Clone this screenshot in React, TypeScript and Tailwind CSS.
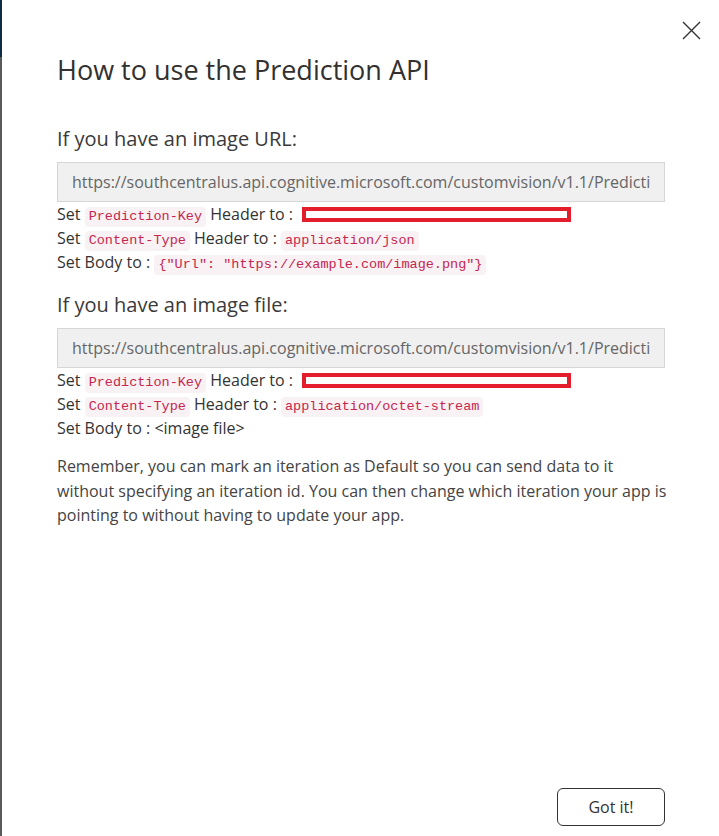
import React from 'react'

function Code({ children }: { children: React.ReactNode }) {
    return (
        <code className="inline-block rounded-[4px] bg-[#f9f2f4] px-[4px] py-[2px] align-baseline font-['Liberation_Mono',monospace] text-[13.5px] leading-[16px] text-[#c7254e]">
            {children}
        </code>
    )
}

function Redacted() {
    return <span className="ml-[9px] inline-block h-[15px] w-[269px] border-4 border-[#e31d2b] bg-white align-[-2px]" />
}

function UrlBox() {
    return (
        <input
            readOnly
            value="https://southcentralus.api.cognitive.microsoft.com/customvision/v1.1/Prediction/3c1b4e0d-9f1a-4b6e-8a2c-7d5e1f0a9b3c/url"
            className="h-[40px] w-[608px] border border-[#d6d6d6] bg-[#f0f0f0] px-[14px] font-['Open_Sans',sans-serif] text-[16px] text-[#666] outline-none"
        />
    )
}

export default function App() {
    return (
        <div className="flex h-[836px] w-[719px] bg-white font-['Open_Sans',sans-serif] text-[#323130]">
            {/* left edge of the page behind the panel */}
            <div className="flex w-[2px] flex-col">
                <div className="h-[57px] bg-[#0f2a45]" />
                <div className="flex-1 bg-[#5a5a5a]" />
            </div>

            <div className="relative flex flex-1 flex-col pl-[55px]">
                <button className="absolute right-[18px] top-[21px] text-[#333]">
                    <svg width="19" height="19" viewBox="0 0 19 19" fill="none" stroke="currentColor" strokeWidth="1.4">
                        <path d="M1 1L18 18M18 1L1 18" />
                    </svg>
                </button>

                <h1 className="mt-[52px] text-[27px] font-normal leading-[36px]">How to use the Prediction API</h1>

                <h2 className="mt-[37px] text-[20px] font-normal leading-[28px] text-[#3a3a3a]">If you have an image URL:</h2>
                <div className="mt-[9px] flex">
                    <UrlBox />
                </div>
                <div className="text-[16px] leading-[24px] text-[#333]">
                    <div className="h-[24px]">Set <Code>Prediction-Key</Code> Header to :<Redacted /></div>
                    <div className="h-[24px]">Set <Code>Content-Type</Code> Header to : <Code>application/json</Code></div>
                    <div className="h-[24px]">Set Body to : <Code>{'{"Url": "https://example.com/image.png"}'}</Code></div>
                </div>

                <h2 className="mt-[17px] text-[20px] font-normal leading-[28px] text-[#3a3a3a]">If you have an image file:</h2>
                <div className="mt-[9px] flex">
                    <UrlBox />
                </div>
                <div className="text-[16px] leading-[24px] text-[#333]">
                    <div className="h-[24px]">Set <Code>Prediction-Key</Code> Header to :<Redacted /></div>
                    <div className="h-[24px]">Set <Code>Content-Type</Code> Header to : <Code>application/octet-stream</Code></div>
                    <div className="h-[24px]">Set Body to : &lt;image file&gt;</div>
                </div>

                <p className="mt-[14px] w-[615px] text-[16px] leading-[24.5px] text-[#444]">
                    Remember, you can mark an iteration as Default so you can send data to it without specifying an iteration id. You can then change which iteration your app is pointing to without having to update your app.
                </p>

                <div className="mt-auto mb-[10px] flex justify-end pr-[54px]">
                    <button className="h-[38px] w-[108px] rounded-[6px] border border-[#333] text-[16px] text-[#333]">
                        Got it!
                    </button>
                </div>
            </div>
        </div>
    )
}
